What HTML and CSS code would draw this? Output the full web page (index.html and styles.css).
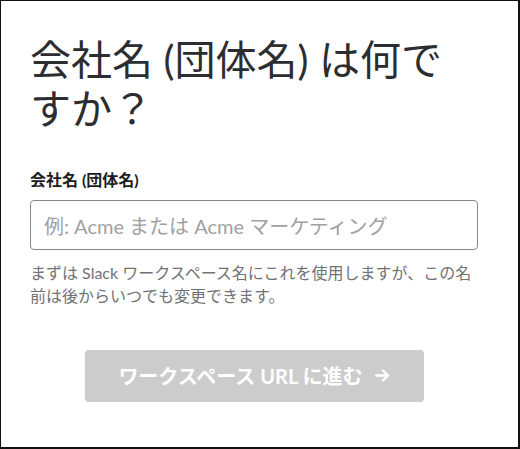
FILE: index.html
```html
<!DOCTYPE html>
<html lang="ja">
<head>
  <meta charset="UTF-8" />
  <meta name="viewport" content="width=device-width, initial-scale=1" />
  <title>会社名 (団体名) は何ですか？</title>
  <link rel="stylesheet" href="styles.css">
</head>
<body>
  <div class="frame">
    <h1>会社名 (団体名) は何ですか？</h1>

    <label for="team-name">会社名 (団体名)</label>
    <input type="text" id="team-name" placeholder="例: Acme または Acme マーケティング" autofocus />

    <p class="hint">まずは Slack ワークスペース名にこれを使用しますが、この名前は後からいつでも変更できます。</p>

    <div class="actions">
      <button class="next-btn" disabled>
        ワークスペース URL に進む
        <svg class="arrow" width="15" height="13" viewBox="0 0 15 13">
          <path d="M1 6.5h12M8 1.5l5 5-5 5" fill="none" stroke="#fff" stroke-width="2.4" stroke-linecap="round" stroke-linejoin="round" />
        </svg>
      </button>
    </div>
  </div>
</body>
</html>
```

FILE: styles.css
```css
*, *::before, *::after {
  box-sizing: border-box; margin: 0; padding: 0;
}
body {
  font-family: Lato, "Noto Sans CJK JP", sans-serif;
  background: #fff;
  color: #1d1c1d;
}
.frame {
  width: 520px;
  height: 449px;
  border: 1px solid #111;
  border-right-width: 2px;
  border-bottom-width: 2px;
  padding: 34px 40px 0 29px;
}
h1 {
  max-width: 440px;
  font-size: 41px;
  font-weight: 400;
  line-height: 49px;
  color: #2c2d30;
  margin-bottom: 36px;
}
label {
  display: block;
  font-size: 16px;
  font-weight: 700;
  line-height: 22px;
  margin-bottom: 9px;
}
input[type="text"] {
  width: 448px;
  height: 50px;
  padding: 2px 12px 0 13px;
  border: 1px solid #868686;
  border-radius: 4px;
  font-size: 20px;
  font-family: inherit;
  color: #1d1c1d;
  caret-color: #1d1c1d;
  outline: none;
}
input::placeholder {
  color: #a0a0a2;
}
.hint {
  width: 448px;
  margin-top: 11px;
  font-size: 16px;
  line-height: 23px;
  color: #717274;
}
.actions {
  width: 448px;
  display: flex;
  justify-content: center;
  margin-top: 43px;
}
.next-btn {
  width: 339px;
  height: 52px;
  background: #cccccc;
  color: #fff;
  border: none;
  border-radius: 4px;
  font-family: inherit;
  font-size: 20px;
  font-weight: 700;
  padding-bottom: 2px;
  display: flex;
  align-items: center;
  justify-content: center;
  gap: 12px;
}
```
